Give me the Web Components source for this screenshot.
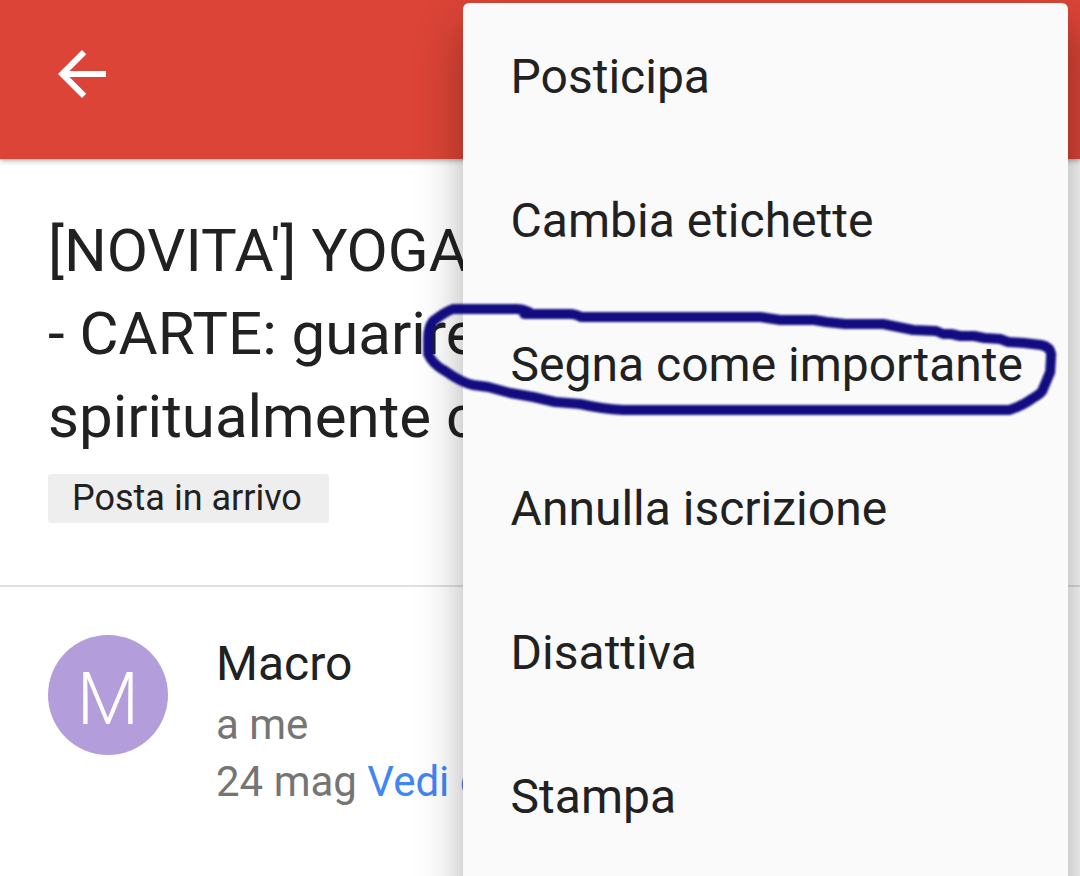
<!DOCTYPE html>
<html lang="it">
<head>
<meta charset="utf-8">
<meta name="viewport" content="width=device-width, initial-scale=1">
<title>Posta in arrivo</title>
<style>
  body { margin: 0; background: #fff; color: #212121; font-family: Roboto, "Noto Sans", sans-serif; }
</style>
</head>
<body>
<mail-screen>
  <app-bar slot="bar"></app-bar>
  <mail-subject slot="content">
    [NOVITA'] YOGA<br>- CARTE: guarire<br>spiritualmente c
    <span slot="label">Posta in arrivo</span>
  </mail-subject>
  <mail-sender slot="content" initial="M">
    Macro
    <span slot="to">a me</span>
    <span slot="date">24 mag</span>
    <span slot="link">Vedi d</span>
  </mail-sender>
  <overflow-menu slot="menu">
    <menu-entry>Posticipa</menu-entry>
    <menu-entry>Cambia etichette</menu-entry>
    <menu-entry>Segna come importante<ink-circle slot="overlay"></ink-circle></menu-entry>
    <menu-entry>Annulla iscrizione</menu-entry>
    <menu-entry>Disattiva</menu-entry>
    <menu-entry>Stampa</menu-entry>
  </overflow-menu>
</mail-screen>

<script>
const define = (name, html, setup) => customElements.define(name, class extends HTMLElement {
  constructor() {
    super();
    this.attachShadow({ mode: "open" }).innerHTML = html;
  }
  connectedCallback() { if (setup) setup(this); }
});

define("mail-screen", `
  <style>
    :host { display: block; position: relative; min-height: 100vh; overflow: hidden; }
    main { display: block; }
  </style>
  <slot name="bar"></slot>
  <main><slot name="content"></slot></main>
  <slot name="menu"></slot>`);

define("app-bar", `
  <style>
    :host { display: block; position: relative; background: #db4437; box-shadow: 0 1px 6px rgba(0,0,0,.4); }
    header { display: flex; padding: 38px 46px 49px; }
    button { display: block; width: 72px; height: 72px; padding: 0; border: 0; background: none; color: #fff; }
    svg { display: block; width: 100%; height: 100%; }
  </style>
  <header>
    <button type="button" aria-label="Indietro">
      <svg viewBox="0 0 24 24" fill="currentColor" aria-hidden="true"><path d="M20 11H7.83l5.59-5.59L12 4l-8 8 8 8 1.41-1.41L7.83 13H20v-2z"/></svg>
    </button>
  </header>`);

define("mail-subject", `
  <style>
    :host { display: block; padding: 50px 48px 62px; border-bottom: 2px solid #e0e0e0; }
    h1 { margin: 0 0 16px; font-size: 60px; line-height: 83px; font-weight: 400; white-space: nowrap; }
    .chip { display: flex; width: fit-content; padding: 0 27px 0 24px; border-radius: 3px; background: #eee; font-size: 36px; line-height: 49px; }
  </style>
  <h1><slot></slot></h1>
  <div class="chip"><slot name="label"></slot></div>`);

define("mail-sender", `
  <style>
    :host { display: flex; gap: 48px; padding: 48px; }
    .avatar { flex: none; box-sizing: border-box; width: 120px; height: 120px; padding-top: 10px; border-radius: 50%; background: #b39ddb;
      color: #fff; font-size: 72px; line-height: 110px; font-weight: 300; text-align: center; }
    .name { margin-bottom: 3px; font-size: 48px; line-height: 58px; }
    .line { font-size: 42px; line-height: 57px; color: #757575; white-space: nowrap; }
    a { color: #4285f4; text-decoration: none; }
  </style>
  <div class="avatar"></div>
  <div>
    <div class="name"><slot></slot></div>
    <div class="line"><slot name="to"></slot></div>
    <div class="line"><slot name="date"></slot> <a href="#dettagli"><slot name="link"></slot></a></div>
  </div>`,
  el => { el.shadowRoot.querySelector(".avatar").textContent = el.getAttribute("initial"); });

define("overflow-menu", `
  <style>
    :host { display: block; position: absolute; top: 3px; right: 12px; bottom: -72px; padding-top: 2px; box-sizing: border-box;
      border-radius: 6px; background: #fafafa; box-shadow: 0 24px 48px rgba(0,0,0,.28), 6px 24px 24px rgba(0,0,0,.08); }
  </style>
  <div role="menu"><slot></slot></div>`);

define("menu-entry", `
  <style>
    :host { display: block; position: relative; }
    button { display: block; width: 100%; padding: 0 45px 0 48px; border: 0; background: none; color: inherit;
      font: 400 48px/144px Roboto, "Noto Sans", sans-serif; text-align: left; white-space: nowrap; }
  </style>
  <button type="button" role="menuitem"><slot></slot></button>
  <slot name="overlay"></slot>`);

define("ink-circle", `
  <style>
    :host { display: block; position: absolute; top: 0; right: 0; bottom: 0; left: -48px; pointer-events: none; }
    svg { display: block; width: 100%; height: 100%; overflow: visible; filter: blur(1px); }
  </style>
  <svg viewBox="415 293 653 144" fill="none" stroke="#120c80" stroke-width="10" stroke-linecap="round" stroke-linejoin="round" aria-hidden="true">
    <path d="M529 312Q522 309 516 309H453Q446 311 433 321Q428 327 428 338V354Q432 364 445 371Q462 383 473 385L488 387L510 393L533 397L555 402L580 404Q602 409 623 410H1009Q1022 406 1033 398Q1040 394 1042 391L1050 372L1051 354Q1050 347 1041 345L1024 343L1008 342L1000 339L984 338L974 336L960 336L951 334L943 334L936 331L913 330L898 327L883 324H845L826 322L814 320H780L760 317H581Q575 314 570 314H524"/>
  </svg>`);
</script>
</body>
</html>
